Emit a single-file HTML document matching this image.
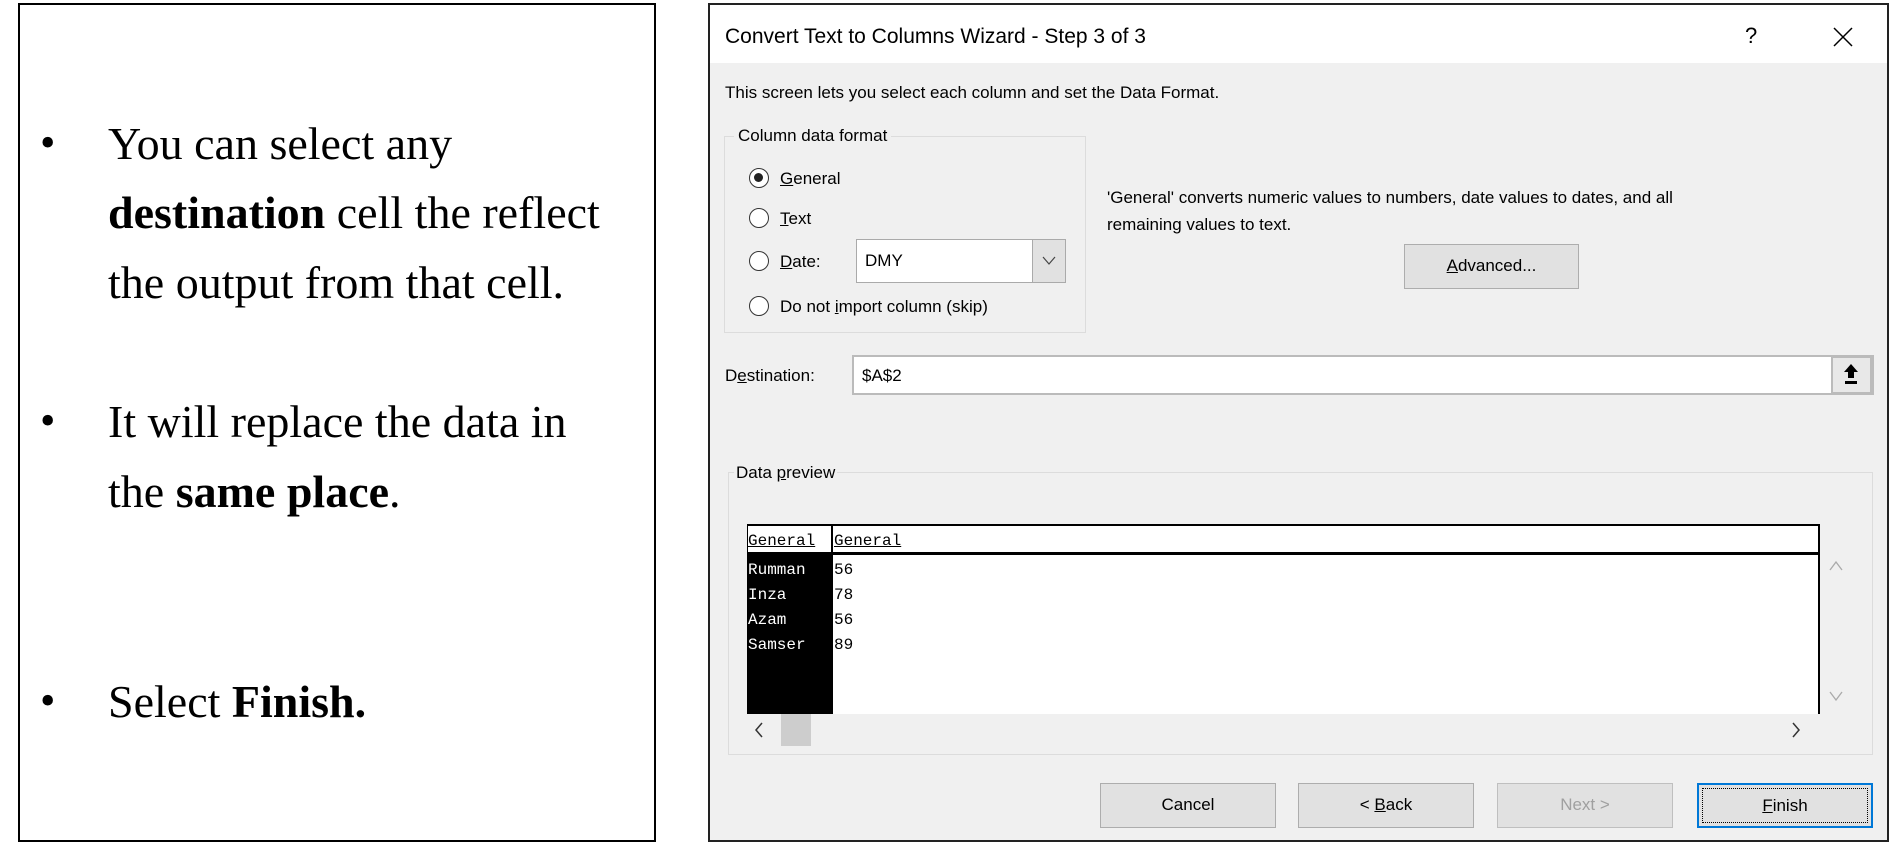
<!DOCTYPE html>
<html><head><meta charset="utf-8">
<style>
*{margin:0;padding:0;box-sizing:border-box}
body{width:1890px;height:845px;background:#fff;position:relative;overflow:hidden;font-family:"Liberation Sans",sans-serif}
.a{position:absolute}
#left{left:18px;top:3px;width:638px;height:839px;border:2px solid #000;background:#fff}
.ln{position:absolute;left:88px;font-family:"Liberation Serif",serif;font-size:46px;color:#000;white-space:nowrap;line-height:52px}
.bl{position:absolute;left:20px;font-family:"Liberation Serif",serif;font-size:44px;line-height:52px}
#dlg{left:708px;top:3px;width:1181px;height:839px;border:2px solid #222;background:#f0f0f0}
.t{position:absolute;font-size:17px;color:#000;white-space:nowrap;line-height:20px}
.grp{position:absolute;border:1px solid #dcdcdc}
.radio{position:absolute;width:20px;height:20px;border:1.5px solid #333;border-radius:50%;background:#fff}
.btn{position:absolute;background:#e1e1e1;border:1px solid #adadad;font-size:17px;text-align:center;line-height:42px;color:#000}
.mono{position:absolute;font-family:"Liberation Mono",monospace;font-size:16px;line-height:25px;white-space:pre}
u{text-decoration:underline}
</style></head><body>
<div id="left" class="a">
 <div class="bl" style="top:112px">•</div>
 <div class="ln" style="top:113px">You can select any</div>
 <div class="ln" style="top:182px"><b>destination</b> cell the reflect</div>
 <div class="ln" style="top:252px">the output from that cell.</div>
 <div class="bl" style="top:390px">•</div>
 <div class="ln" style="top:391px">It will replace the data in</div>
 <div class="ln" style="top:461px">the <b>same place</b>.</div>
 <div class="bl" style="top:670px">•</div>
 <div class="ln" style="top:671px">Select <b>Finish.</b></div>
</div>
<div id="dlg" class="a">
 <div class="a" style="left:0;top:0;width:1177px;height:58px;background:#fff"></div>
 <div class="t" style="left:15px;top:19px;font-size:21px;line-height:26px">Convert Text to Columns Wizard - Step 3 of 3</div>
 <div class="t" style="left:1035px;top:21px;font-size:22px">?</div>
 <svg class="a" style="left:1123px;top:22px" width="20" height="20"><path d="M1 1L19 19M19 1L1 19" stroke="#000" stroke-width="1.5"/></svg>
 <div class="t" style="left:15px;top:78px">This screen lets you select each column and set the Data Format.</div>
 <div class="grp" style="left:14px;top:131px;width:362px;height:197px"></div>
 <div class="t" style="left:24px;top:121px;background:#f0f0f0;padding:0 4px">Column data format</div>
 <div class="radio" style="left:39px;top:163px"><div style="position:absolute;left:4px;top:4px;width:9px;height:9px;border-radius:50%;background:#222"></div></div>
 <div class="t" style="left:70px;top:164px"><u>G</u>eneral</div>
 <div class="radio" style="left:39px;top:203px"></div>
 <div class="t" style="left:70px;top:204px"><u>T</u>ext</div>
 <div class="radio" style="left:39px;top:246px"></div>
 <div class="t" style="left:70px;top:247px"><u>D</u>ate:</div>
 <div class="a" style="left:146px;top:234px;width:210px;height:44px;background:#fff;border:1px solid #aaa"></div>
 <div class="t" style="left:155px;top:246px">DMY</div>
 <div class="a" style="left:322px;top:235px;width:33px;height:42px;background:#e1e1e1;border-left:1px solid #aaa"></div>
 <svg class="a" style="left:332px;top:251px" width="14" height="10"><path d="M1 1L7 8L13 1" stroke="#444" fill="none" stroke-width="1.2"/></svg>
 <div class="radio" style="left:39px;top:291px"></div>
 <div class="t" style="left:70px;top:292px">Do not <u>i</u>mport column (skip)</div>
 <div class="t" style="left:397px;top:183px">'General' converts numeric values to numbers, date values to dates, and all</div>
 <div class="t" style="left:397px;top:210px">remaining values to text.</div>
 <div class="btn" style="left:694px;top:239px;width:175px;height:45px"><u>A</u>dvanced...</div>
 <div class="t" style="left:15px;top:361px">D<u>e</u>stination:</div>
 <div class="a" style="left:142px;top:350px;width:1022px;height:40px;background:#fff;border:2px solid #bbb"></div>
 <div class="t" style="left:152px;top:361px">$A$2</div>
 <div class="a" style="left:1121px;top:351px;width:41px;height:38px;background:#e8e8e8;border:2px solid #bbb"></div>
 <svg class="a" style="left:1131px;top:357px" width="20" height="26"><path d="M10 2L3 10H7V16H13V10H17Z" fill="#000"/><rect x="4" y="19" width="12" height="3" fill="#000"/></svg>
 <div class="grp" style="left:18px;top:467px;width:1145px;height:283px"></div>
 <div class="t" style="left:24px;top:458px;background:#f0f0f0;padding:0 2px">Data <u>p</u>review</div>
 <div class="a" style="left:37px;top:519px;width:1073px;height:190px;background:#fff;border-top:2px solid #000;border-left:1px solid #000;border-right:2px solid #000"></div>
 <div class="a" style="left:37px;top:547px;width:1073px;height:3px;background:#000"></div>
 <div class="a" style="left:38px;top:550px;width:85px;height:159px;background:#000"></div>
 <div class="a" style="left:121px;top:520px;width:2px;height:189px;background:#000"></div>
 <div class="mono" style="left:38px;top:524px;text-decoration:underline">General</div>
 <div class="mono" style="left:124px;top:524px;text-decoration:underline">General</div>
 <div class="mono" style="left:38px;top:553px;color:#fff">Rumman
Inza
Azam
Samser</div>
 <div class="mono" style="left:124px;top:553px">56
78
56
89</div>
 <svg class="a" style="left:1119px;top:556px" width="14" height="10"><path d="M1 9L7 1L13 9" stroke="#aaa" fill="none" stroke-width="1.3"/></svg>
 <svg class="a" style="left:1119px;top:686px" width="14" height="10"><path d="M1 1L7 9L13 1" stroke="#aaa" fill="none" stroke-width="1.3"/></svg>
 <div class="a" style="left:38px;top:709px;width:1072px;height:32px;background:#f0f0f0"></div>
 <div class="a" style="left:71px;top:709px;width:30px;height:32px;background:#cdcdcd"></div>
 <svg class="a" style="left:44px;top:717px" width="10" height="16"><path d="M8 1L2 8L8 15" stroke="#333" fill="none" stroke-width="1.5"/></svg>
 <svg class="a" style="left:1081px;top:717px" width="10" height="16"><path d="M2 1L8 8L2 15" stroke="#333" fill="none" stroke-width="1.5"/></svg>
 <div class="btn" style="left:390px;top:778px;width:176px;height:45px">Cancel</div>
 <div class="btn" style="left:588px;top:778px;width:176px;height:45px">&lt; <u>B</u>ack</div>
 <div class="btn" style="left:787px;top:778px;width:176px;height:45px;color:#a0a0a0;border-color:#bfbfbf">Next &gt;</div>
 <div class="btn" style="left:987px;top:778px;width:176px;height:45px;border:2px solid #0078d7;line-height:41px"><div style="position:absolute;left:3px;top:3px;right:3px;bottom:3px;border:1px dotted #000"></div><u>F</u>inish</div>
</div>
</body></html>
